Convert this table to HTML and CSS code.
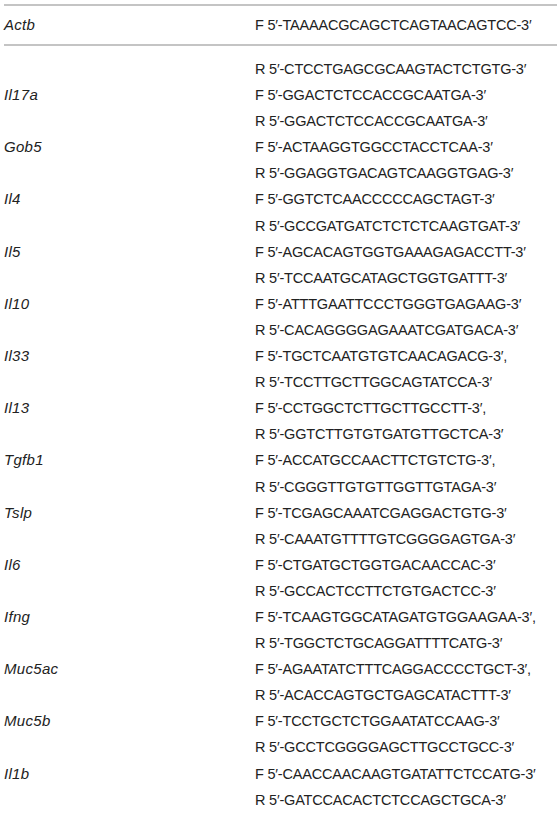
FILE: index.html
```html
<!DOCTYPE html>
<html lang="en">
<head>
<meta charset="utf-8">
<title>Primer sequences</title>
<link rel="stylesheet" href="styles.css">
</head>
<body>
<table class="primers">
  <thead>
    <tr class="head-row"><td class="gene">Actb</td><td class="seq">F 5′-TAAAACGCAGCTCAGTAACAGTCC-3′</td></tr>
  </thead>
  <tbody>
    <tr class="first"><td class="gene"></td><td class="seq">R 5′-CTCCTGAGCGCAAGTACTCTGTG-3′</td></tr>
    <tr><td class="gene">Il17a</td><td class="seq">F 5′-GGACTCTCCACCGCAATGA-3′</td></tr>
    <tr><td class="gene"></td><td class="seq">R 5′-GGACTCTCCACCGCAATGA-3′</td></tr>
    <tr><td class="gene">Gob5</td><td class="seq">F 5′-ACTAAGGTGGCCTACCTCAA-3′</td></tr>
    <tr><td class="gene"></td><td class="seq">R 5′-GGAGGTGACAGTCAAGGTGAG-3′</td></tr>
    <tr><td class="gene">Il4</td><td class="seq">F 5′-GGTCTCAACCCCCAGCTAGT-3′</td></tr>
    <tr><td class="gene"></td><td class="seq">R 5′-GCCGATGATCTCTCTCAAGTGAT-3′</td></tr>
    <tr><td class="gene">Il5</td><td class="seq">F 5′-AGCACAGTGGTGAAAGAGACCTT-3′</td></tr>
    <tr><td class="gene"></td><td class="seq">R 5′-TCCAATGCATAGCTGGTGATTT-3′</td></tr>
    <tr><td class="gene">Il10</td><td class="seq">F 5′-ATTTGAATTCCCTGGGTGAGAAG-3′</td></tr>
    <tr><td class="gene"></td><td class="seq">R 5′-CACAGGGGAGAAATCGATGACA-3′</td></tr>
    <tr><td class="gene">Il33</td><td class="seq">F 5′-TGCTCAATGTGTCAACAGACG-3′,</td></tr>
    <tr><td class="gene"></td><td class="seq">R 5′-TCCTTGCTTGGCAGTATCCA-3′</td></tr>
    <tr><td class="gene">Il13</td><td class="seq">F 5′-CCTGGCTCTTGCTTGCCTT-3′,</td></tr>
    <tr><td class="gene"></td><td class="seq">R 5′-GGTCTTGTGTGATGTTGCTCA-3′</td></tr>
    <tr><td class="gene">Tgfb1</td><td class="seq">F 5′-ACCATGCCAACTTCTGTCTG-3′,</td></tr>
    <tr><td class="gene"></td><td class="seq">R 5′-CGGGTTGTGTTGGTTGTAGA-3′</td></tr>
    <tr><td class="gene">Tslp</td><td class="seq">F 5′-TCGAGCAAATCGAGGACTGTG-3′</td></tr>
    <tr><td class="gene"></td><td class="seq">R 5′-CAAATGTTTTGTCGGGGAGTGA-3′</td></tr>
    <tr><td class="gene">Il6</td><td class="seq">F 5′-CTGATGCTGGTGACAACCAC-3′</td></tr>
    <tr><td class="gene"></td><td class="seq">R 5′-GCCACTCCTTCTGTGACTCC-3′</td></tr>
    <tr><td class="gene">Ifng</td><td class="seq">F 5′-TCAAGTGGCATAGATGTGGAAGAA-3′,</td></tr>
    <tr><td class="gene"></td><td class="seq">R 5′-TGGCTCTGCAGGATTTTCATG-3′</td></tr>
    <tr><td class="gene">Muc5ac</td><td class="seq">F 5′-AGAATATCTTTCAGGACCCCTGCT-3′,</td></tr>
    <tr><td class="gene"></td><td class="seq">R 5′-ACACCAGTGCTGAGCATACTTT-3′</td></tr>
    <tr><td class="gene">Muc5b</td><td class="seq">F 5′-TCCTGCTCTGGAATATCCAAG-3′</td></tr>
    <tr><td class="gene"></td><td class="seq">R 5′-GCCTCGGGGAGCTTGCCTGCC-3′</td></tr>
    <tr><td class="gene">Il1b</td><td class="seq">F 5′-CAACCAACAAGTGATATTCTCCATG-3′</td></tr>
    <tr><td class="gene"></td><td class="seq">R 5′-GATCCACACTCTCCAGCTGCA-3′</td></tr>
  </tbody>
</table>
</body>
</html>
```
FILE: styles.css
```css
html, body {
  margin: 0;
  padding: 0;
  background: #ffffff;
}

body {
  padding: 4px 2px 0 4px;
  font-family: "Liberation Sans", Arial, Helvetica, sans-serif;
  font-size: 14.5px;
  color: #222222;
}

.primers {
  width: 553px;
  border-collapse: collapse;
  border-top: 2px solid #c4c4c4;
}

.primers td {
  padding: 0;
  height: 26.1px;
  line-height: 26.1px;
  vertical-align: middle;
  white-space: nowrap;
}

.primers .gene {
  width: 251px;
  font-style: italic;
  font-size: 15px;
  letter-spacing: 0.3px;
}

.primers .seq {
  letter-spacing: -0.2px;
}

.head-row td {
  height: 38px;
  line-height: 38px;
  border-bottom: 2px solid #c4c4c4;
}

.first td {
  padding-top: 10px;
}
```
